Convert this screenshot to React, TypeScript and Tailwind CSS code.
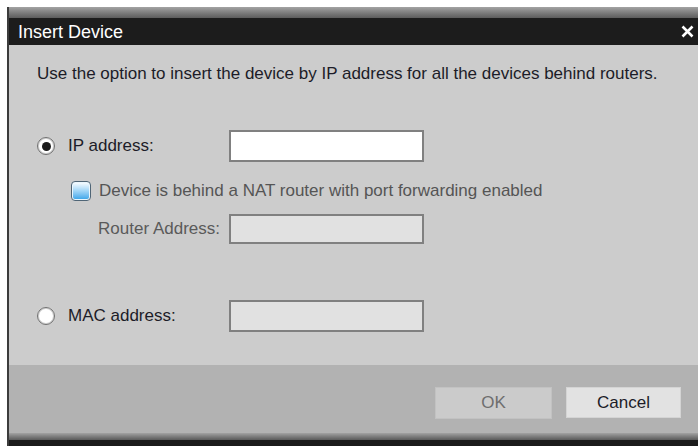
import React from "react";

const font = { fontFamily: '"Liberation Sans", Arial, sans-serif' };

/** Classic round radio, filled dot when selected */
function Radio({ checked }: { checked?: boolean }) {
  return (
    <span className="flex h-[18px] w-[18px] flex-shrink-0 items-center justify-center rounded-full border border-[#6f6f6f] bg-white shadow-[inset_0_0_0_1px_#cfcfcf]">
      {checked && <span className="h-[9px] w-[9px] rounded-full bg-[#1b1b1b]" />}
    </span>
  );
}

/** Glossy blue checkbox (unchecked) */
function GlossyCheckbox() {
  return (
    <span className="flex h-[20px] w-[20px] flex-shrink-0 rounded-[4px] border border-[#4f6576] bg-[#eaf6fd] p-[1px]">
      <span className="flex-1 rounded-[2px] bg-gradient-to-b from-[#f4fbff] via-[#9fd5f7] to-[#3fa8ea]" />
    </span>
  );
}

function TextBox({ disabled, short }: { disabled?: boolean; short?: boolean }) {
  return (
    <div
      className={`w-[195px] border-2 border-[#808080] ${disabled ? "bg-[#e1e1e1]" : "bg-white"} ${
        short ? "h-[30px]" : "h-[32px]"
      }`}
    />
  );
}

export default function App() {
  return (
    <div className="flex h-[446px] w-[698px] overflow-hidden bg-white pl-[7px] pt-[7px]" style={font}>
      <div className="flex flex-1 flex-col border-l-2 border-[#3c3c3c]">
        {/* Title bar */}
        <div className="h-[11px] bg-gradient-to-b from-[#a3a3a3] to-[#5c5c5c]" />
        <div className="flex h-[27px] items-center justify-between bg-[#1c1c1c] pl-[9px] pr-[4px]">
          <span className="text-[18px] leading-none text-white">Insert Device</span>
          <svg width="13" height="13" viewBox="0 0 13 13">
            <path d="M1.5 1.5 L11.5 11.5 M11.5 1.5 L1.5 11.5" stroke="#fff" strokeWidth="2.6" />
          </svg>
        </div>

        {/* Body */}
        <div className="flex h-[320px] flex-col bg-[#cccccc] pl-[28px] pt-[19px] text-[17px] leading-[20px] text-[#1c1c28]">
          <p>Use the option to insert the device by IP address for all the devices behind routers.</p>

          <div className="mt-[46px] flex h-[32px] items-center">
            <div className="flex w-[192px] items-center gap-[13px]">
              <Radio checked />
              <span>IP address:</span>
            </div>
            <TextBox />
          </div>

          <div className="ml-[34px] mt-[19px] flex h-[20px] items-center gap-[8px] text-[#555555]">
            <GlossyCheckbox />
            <span>Device is behind a NAT router with port forwarding enabled</span>
          </div>

          <div className="mt-[13px] flex h-[30px] items-center">
            <span className="w-[192px] pr-[9px] text-right text-[#5a5a5a]">Router Address:</span>
            <TextBox disabled short />
          </div>

          <div className="mt-[56px] flex h-[32px] items-center">
            <div className="flex w-[192px] items-center gap-[13px]">
              <Radio />
              <span>MAC address:</span>
            </div>
            <TextBox disabled />
          </div>
        </div>

        {/* Footer */}
        <div className="flex h-[68px] justify-end gap-[14px] bg-[#b2b2b2] pr-[17px] pt-[22px] text-[17px]">
          <button className="h-[32px] w-[117px] border border-[#c2c2c2] bg-[#cbcbcb] text-[#6e6e6e]">OK</button>
          <button className="h-[31px] w-[115px] border border-[#d4d4d4] bg-[#e2e2e2] text-[#1c1c28]">Cancel</button>
        </div>
        <div className="h-[7px] bg-gradient-to-b from-[#a2a2a2] to-[#5a5a5a]" />
        <div className="flex-1 bg-[#1b1b1b]" />
      </div>
    </div>
  );
}
